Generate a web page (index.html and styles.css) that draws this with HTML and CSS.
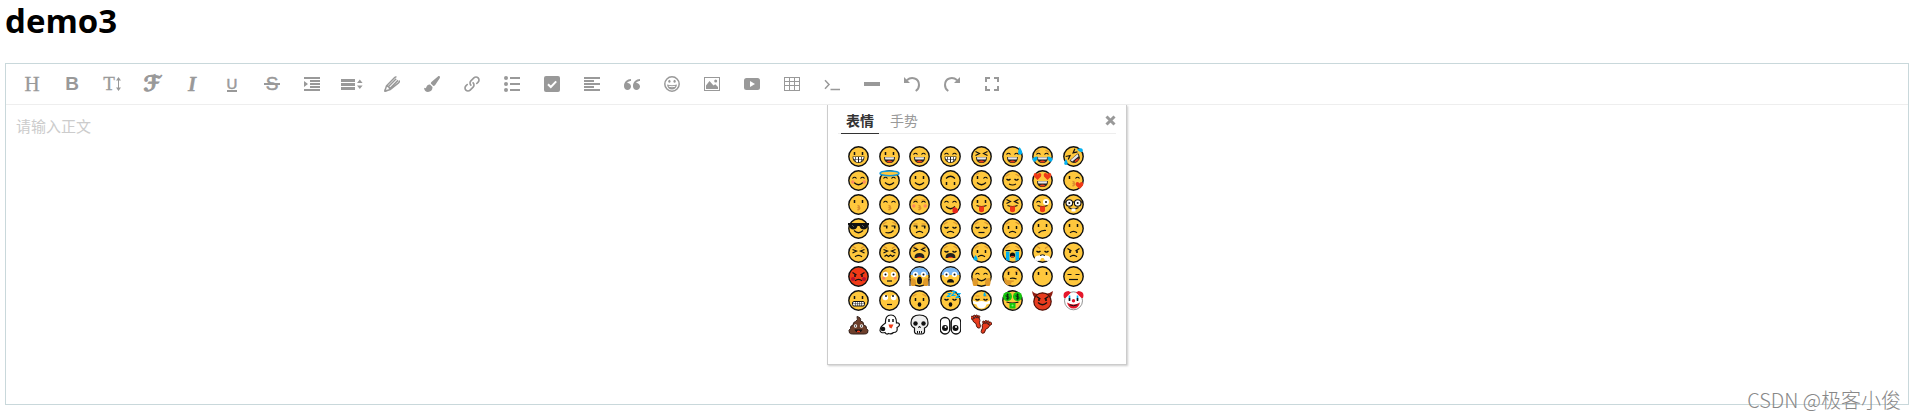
FILE: index.html
```html
<!DOCTYPE html>
<html lang="zh-CN">
<head>
    <meta charset="UTF-8">
    <meta name="viewport" content="width=device-width, initial-scale=1.0">
    <title>demo3</title>
    <link rel="stylesheet" href="styles.css">
</head>
<body>
    <h1>demo3</h1>

    <div class="editor">
        <div class="toolbar">
            <button class="tool tool-head" title="标题">H</button>
            <button class="tool tool-bold" title="加粗">B</button>
            <button class="tool tool-size" title="字号">T<svg width="5" height="14" viewBox="0 0 5 14"><path d="M2 3h1v8H2zM0 3.500L2.500 0 5 3.500zM0 10.500h5L2.500 14z"/></svg></button>
            <button class="tool tool-font" title="字体">ℱ</button>
            <button class="tool tool-italic" title="斜体">I</button>
            <button class="tool tool-underline" title="下划线"><span>U</span></button>
            <button class="tool tool-strike" title="删除线"><span>S</span></button>
            <button class="tool" title="缩进"><svg class="icon" viewBox="0 0 16 16"><path d="M0 1h16v2H0zM6 4h10v2H6zM6 7h10v2H6zM6 10h10v2H6zM0 13h16v2H0zM0 11V5l4 3z"/></svg></button>
            <button class="tool" title="行高"><svg class="icon icon-wide" viewBox="0 0 22 16"><path d="M0 3h14v3H0zM0 7h14v3H0zM0 11h14v3H0zM16 7l2.800-3.500L21.600 7zM16 9.500h5.600L18.800 13z"/></svg></button>
            <button class="tool" title="文字颜色"><svg class="icon" viewBox="0 0 16 16"><path class="line" d="M.8 15.200l1.700-5.400L10.700 1.500q.8-.8 1.800-.4M4 11l8.200-8.200M5.200 13.200l8.800-8.800M.8 15.200l5.400-1.700 8.300-6.700q1.200-1 .7-2.300M2.500 9.800q2.600.5 3.700 3.700"/><path d="M0 16l1-3.500L3.500 15z"/></svg></button>
            <button class="tool" title="背景色"><svg class="icon" viewBox="0 0 16 16"><path d="M15.600.3c.6.5.4 1.400.1 2L11.200 9c-.5.7-1.100 1-1.800 1L6.800 7.500c0-.7.3-1.300.9-1.800l6.200-5.200c.5-.4 1.200-.6 1.700-.2zM6 8.500l2.500 2.400C8.700 14 6.700 16 4 16c-2.200 0-3.600-1.200-4-4.200 1 .7 1.800.6 2.200-.3C2.900 9.600 4 8.300 6 8.500z"/></svg></button>
            <button class="tool" title="链接"><svg class="icon" viewBox="0 0 16 16"><path d="M6.879 9.934c-0.208 0-0.416-0.079-0.575-0.238-1.486-1.486-1.486-3.905 0-5.392l3-3c0.720-0.720 1.678-1.117 2.696-1.117s1.976 0.397 2.696 1.117c1.486 1.487 1.486 3.905 0 5.392l-1.371 1.371c-0.317 0.317-0.832 0.317-1.149 0s-0.317-0.832 0-1.149l1.371-1.371c0.853-0.853 0.853-2.241 0-3.094-0.413-0.413-0.963-0.641-1.547-0.641s-1.134 0.228-1.547 0.641l-3 3c-0.853 0.853-0.853 2.241 0 3.094 0.317 0.317 0.317 0.832 0 1.149-0.159 0.159-0.367 0.238-0.575 0.238zM4 15.813c-1.018 0-1.976-0.397-2.696-1.117-1.486-1.486-1.486-3.905 0-5.392l1.371-1.371c0.317-0.317 0.832-0.317 1.149 0s0.317 0.832 0 1.149l-1.371 1.371c-0.853 0.853-0.853 2.241 0 3.094 0.413 0.413 0.962 0.641 1.547 0.641s1.134-0.228 1.547-0.641l3-3c0.853-0.853 0.853-2.241 0-3.094-0.317-0.317-0.317-0.832 0-1.149s0.832-0.317 1.149 0c1.486 1.486 1.486 3.905 0 5.392l-3 3c-0.720 0.720-1.678 1.117-2.696 1.117z"/></svg></button>
            <button class="tool" title="序列"><svg class="icon" viewBox="0 0 16 16"><circle cx="2" cy="2" r="2"/><circle cx="2" cy="8" r="2"/><circle cx="2" cy="14" r="2"/><path d="M6 1h10v2H6zM6 7h10v2H6zM6 13h10v2H6z"/></svg></button>
            <button class="tool" title="待办事项"><svg class="icon" viewBox="0 0 16 16"><rect width="16" height="16" rx="2"/><path class="cut" d="M4 8.200l2.800 2.800 5.400-5.600"/></svg></button>
            <button class="tool" title="对齐"><svg class="icon" viewBox="0 0 16 16"><path d="M0 1h16v2H0zM0 4h10v2H0zM0 7h16v2H0zM0 10h10v2H0zM0 13h16v2H0z"/></svg></button>
            <button class="tool" title="引用"><svg class="icon" viewBox="0 0 16 16"><path d="M3.516 7c1.933 0 3.500 1.567 3.500 3.500s-1.567 3.500-3.500 3.500-3.500-1.567-3.500-3.500l-0.016-0.500c0-3.866 3.134-7 7-7v2c-1.336 0-2.591 0.520-3.536 1.464-0.182 0.182-0.348 0.375-0.497 0.578 0.179-0.028 0.362-0.043 0.548-0.043zM12.516 7c1.933 0 3.500 1.567 3.500 3.500s-1.567 3.500-3.500 3.500-3.500-1.567-3.500-3.500l-0.016-0.500c0-3.866 3.134-7 7-7v2c-1.336 0-2.591 0.520-3.536 1.464-0.182 0.182-0.348 0.375-0.497 0.578 0.179-0.028 0.362-0.043 0.549-0.043z"/></svg></button>
            <button class="tool" title="表情"><svg class="icon" viewBox="0 0 16 16"><circle class="line" cx="8" cy="8" r="7.200"/><ellipse cx="5.400" cy="5.300" rx="1.100" ry="1.500"/><ellipse cx="10.600" cy="5.300" rx="1.100" ry="1.500"/><path d="M3 8.500q5 1.600 10 0c-.3 3-2.200 5-5 5s-4.700-2-5-5z"/><path class="cut-thin" d="M4.800 10.300q3.200.9 6.400 0"/></svg></button>
            <button class="tool" title="图片"><svg class="icon" viewBox="0 0 16 16"><path d="M0 1h16v14H0zM1 2v12h14V2z" fill-rule="evenodd"/><path d="M2 13V9.500L5.500 5l4 4.500 1.800-1.300L14 11v2z"/><circle cx="11.700" cy="5" r="1.500"/></svg></button>
            <button class="tool" title="视频"><svg class="icon" viewBox="0 0 16 16"><rect y="2" width="16" height="12" rx="2.500"/><path class="hole" d="M6 5l5 3-5 3z"/></svg></button>
            <button class="tool" title="表格"><svg class="icon" viewBox="0 0 16 16"><path fill-rule="evenodd" d="M0 1h16v14H0zM1 2v3h4V2zM6 2v3h4V2zM11 2v3h4V2zM1 6v3h4V6zM6 6v3h4V6zM11 6v3h4V6zM1 10v4h4v-4zM6 10v4h4v-4zM11 10v4h4v-4z"/></svg></button>
            <button class="tool" title="代码"><svg class="icon" viewBox="0 0 16 16"><path class="line" d="M1 4.300L5 8.500 1 12.700M6.500 13.500H16"/></svg></button>
            <button class="tool" title="分割线"><svg class="icon" viewBox="0 0 16 16"><path d="M0 6h16v4H0z"/></svg></button>
            <button class="tool" title="撤销"><svg class="icon" viewBox="0 0 16 16"><path d="M0 1v6h6z"/><path class="line bold" d="M2.800 4.300C7.500.3 15 2 15 9c0 2.800-1.300 4.800-3.300 6"/></svg></button>
            <button class="tool" title="恢复"><svg class="icon" viewBox="0 0 16 16"><path d="M16 1v6h-6z"/><path class="line bold" d="M13.200 4.300C8.500.3 1 2 1 9c0 2.800 1.300 4.800 3.300 6"/></svg></button>
            <button class="tool" title="全屏"><svg class="icon" viewBox="0 0 16 16"><path d="M1 1h5v2H3v3H1zM10 1h5v5h-2V3h-3zM1 10h2v3h3v2H1zM13 10h2v5h-5v-2h3z"/></svg></button>
        </div>

        <textarea class="text" placeholder="请输入正文" aria-label="正文"></textarea>

        <!-- Emoji drop panel -->
        <div class="panel">
            <div class="panel-head">
                <button class="tab active">表情</button>
                <button class="tab">手势</button>
                <button class="close" aria-label="关闭"><svg width="11" height="11" viewBox="0 0 11 11"><path d="M1.500 1.500l8 8M9.500 1.500l-8 8"/></svg></button>
            </div>
            <div class="emojis" id="emojis"></div>
        </div>
    </div>

    <span class="watermark">CSDN @极客小俊</span>

    <script src="emoji.js"></script>
</body>
</html>
```
FILE: styles.css
```css
* {
    box-sizing: border-box;
}

body {
    position: relative;
    min-height: 100vh;
    margin: 0 7px 0 5px;
    background: #fff;
    color: #000;
    font-family: "Open Sans", "Noto Sans CJK SC", sans-serif;
}

h1 {
    margin: 0 0 21px;
    font-size: 33px;
    line-height: 42px;
}

button {
    padding: 0;
    border: none;
    background: none;
    font-family: inherit;
    cursor: pointer;
}

.editor {
    position: relative;
    border: 1px solid #c9d8db;
}

/* Toolbar */
.toolbar {
    display: flex;
    flex-wrap: wrap;
    padding: 0 6px;
    border-bottom: 1px solid #eee;
}

.tool {
    display: flex;
    align-items: center;
    justify-content: center;
    width: 40px;
    height: 40px;
    color: #999;
    line-height: 20px;
}

.tool svg {
    fill: #999;
}

.tool:hover {
    background: #f6f6f6;
}

.icon {
    width: 16px;
    height: 16px;
}

.icon-wide {
    width: 22px;
}

.icon .line {
    fill: none;
    stroke: #999;
    stroke-width: 1.5;
}

.icon .bold {
    stroke-width: 2;
}

.icon .cut,
.icon .cut-thin {
    fill: none;
    stroke: #fff;
    stroke-width: 2;
}

.icon .cut-thin {
    stroke-width: 1;
}

.icon .hole {
    fill: #fff;
}

.tool-head,
.tool-size,
.tool-italic {
    font-family: "Liberation Serif", serif;
    font-size: 21px;
    -webkit-text-stroke: 0.3px #999;
}

.tool-size {
    gap: 1px;
    font-size: 19px;
}

.tool-bold {
    font-family: "Liberation Sans", sans-serif;
    font-size: 19px;
    font-weight: bold;
}

.tool-font {
    font-family: "DejaVu Serif", "DejaVu Sans", serif;
    font-size: 21px;
    font-weight: bold;
    -webkit-text-stroke: 1px #999;
}

.tool-italic {
    font-style: italic;
    font-weight: bold;
}

.tool-underline,
.tool-strike {
    font-family: "Liberation Sans", sans-serif;
    font-size: 15px;
    -webkit-text-stroke: 0.5px #999;
}

.tool-underline span {
    border-bottom: 2px solid #999;
    line-height: 13px;
}

.tool-strike {
    font-size: 19px;
}

.tool-strike span {
    position: relative;
    padding: 0 2px;
}

.tool-strike span::after {
    content: "";
    position: absolute;
    left: 0;
    right: 0;
    top: 9px;
    height: 2px;
    background: #999;
}

/* Editing area */
.text {
    display: block;
    width: 100%;
    height: 299px;
    padding: 10px;
    border: none;
    outline: none;
    background: none;
    resize: none;
    font-family: inherit;
    font-size: 15px;
    line-height: 22px;
}

.text::placeholder {
    color: #ccc;
    opacity: 1;
}

/* Emoji panel */
.panel {
    position: absolute;
    top: 41px;
    left: 50%;
    width: 300px;
    height: 260px;
    margin-left: -130px;
    padding: 0 10px;
    border: 1px solid #ccc;
    border-top: none;
    background: #fff;
    box-shadow: 1px 1px 2px #ccc;
}

.panel-head {
    display: flex;
    height: 29px;
    padding: 0 0 0 3px;
    gap: 6px;
    border-bottom: 1px solid #eee;
}

.tab {
    height: 29px;
    padding: 4px 5px 0;
    border-bottom: 1px solid transparent;
    color: #999;
    font-size: 14px;
    line-height: 20px;
}

.tab.active {
    border-color: #333;
    color: #333;
    font-weight: bold;
}

.close {
    height: 30px;
    margin-left: auto;
}

.close svg {
    display: block;
    fill: none;
    stroke: #999;
    stroke-width: 3;
}

.emojis {
    display: grid;
    grid-template-columns: repeat(8, 1fr);
    grid-auto-rows: 24px;
    width: 246px;
    margin: 10px 5px;
}

.emoji {
    display: flex;
    align-items: center;
    justify-content: center;
}

.emoji svg {
    width: 21px;
    height: 21px;
}

.watermark {
    position: absolute;
    right: 8px;
    bottom: 3px;
    color: #888;
    font-family: "Noto Sans CJK SC", sans-serif;
    font-size: 20px;
    font-weight: 300;
    line-height: 30px;
    white-space: nowrap;
}
```
FILE: emoji.js
```javascript
// Every emoji is a 21x21 drawing put together from shared parts.
const ink = (d, w = 1.2) => `<path d="${d}" fill="none" stroke="#111" stroke-width="${w}"/>`;
const hue = (d, c, w = 1.2) => `<path d="${d}" fill="none" stroke="${c}" stroke-width="${w}"/>`;
const fill = (d, c) => `<path d="${d}" fill="${c}"/>`;
const dot = (x, y, r, c) => `<circle cx="${x}" cy="${y}" r="${r}" fill="${c}"/>`;
const disc = c => `<circle cx="10.5" cy="10.5" r="9.7" fill="${c}" stroke="#111" stroke-width="1.4"/>`;
const turn = (a, s) => `<g transform="rotate(${a} 10.5 10.5)">${s}</g>`;

const BROWN = '#d9902f', RED = '#f03a17', BLUE = '#00b0f0', PINK = '#ff8a5c';

const P = {
    face: disc('#ffc83d'),
    dots: ink('M6.5 6v3M14.5 6v3', 1.5),
    low: ink('M6.5 8v3M14.5 8v3', 1.5),
    happy: ink('M4.500 8.500q2-2.500 4 0M12.500 8.500q2-2.500 4 0'),
    closed: ink('M4.500 9q2 2 4 0M12.500 9q2 2 4 0'),
    squint: ink('M4.500 5.500L8.500 7.500 4.500 9.500M16.500 5.500L12.500 7.500 16.500 9.500'),
    wink: ink('M6.5 6v3', 1.5) + ink('M12.500 8.500q2-2.500 4 0'),
    flat: ink('M4.500 8.500h4M12.500 8.500h4'),
    side: ink('M4.500 8h4M12.500 8h4') + ink('M7.700 8v2.500M15.700 8v2.500', 1.5),
    angry: ink('M4.500 6.500l4 2.500M16.500 6.500l-4 2.500') + ink('M7 8.500v2.500M14 8.500v2.500', 1.6),
    wide: dot(6.5, 8.5, 2.7, '#fff') + dot(14.5, 8.5, 2.7, '#fff') + dot(6.5, 8.5, 1, '#111') + dot(14.5, 8.5, 1, '#111'),
    browUp: hue('M4 6.500q1-1.800 3.500-2M17 6.500q-1-1.800-3.500-2', BROWN),
    browDown: hue('M4 4.500q2 0 4 2M17 4.500q-2 0-4 2', BROWN),
    browFlat: hue('M4.500 6h4M12.500 6h4', BROWN),
    smile: ink('M6 12.500q4.500 4.500 9 0'),
    frown: ink('M7 14.800q3.500-3 7 0'),
    line: ink('M7.5 14.500h6'),
    slant: ink('M6.500 15q3-3 7.500-2.500'),
    smirk: ink('M6.500 14.500q5 1.500 8-2'),
    wavy: ink('M5.500 14.500l2-1.500 2 1.500 2-1.500 2 1.500 2-1.500'),
    kiss: hue('M9.500 11.500q3 .5 1 2 3 .5-1 2.500', BROWN, 1.4),
    grin: fill('M4.500 10.500h12q0 6.500-6 6.500t-6-6.500z', '#222') + fill('M5.300 11h2v2h-1.500zM8 11h2v2H8zM11 11h2v2h-2zM13.700 11h2l-.5 2h-1.500zM6.300 13.600H7.500v1.800zM8 13.600h2v2.600l-2-.5zM11 13.600h2v2l-2 .6zM13.700 13.600h1.200l-1.200 1.600z', '#fff'),
    open: fill('M5 11h11q0 6-5.500 6T5 11z', '#222') + fill('M5.800 11.300h9.400l-.6 2.200H6.400z', '#e8e8e8')
        + fill('M7.500 15.700q3-2.500 6 0-3 1.600-6 0z', RED),
    wail: fill('M5.500 16q0-5 5-5t5 5z', '#222') + fill('M7.500 16q3-2.500 6 0z', RED),
    tongue: ink('M5.500 11.500q5 2 10 0') + fill('M8 12.300h5v4q0 2-2.500 2T8 16.300z', RED),
    gasp: '<ellipse cx="10.5" cy="14.5" rx="1.800" ry="2.200" fill="#111"/>',
    blush: dot(4.8, 12, 1.7, PINK) + dot(16.2, 12, 1.7, PINK),
    tears: fill('M5.500 10.500q-4.500.5-5 2.800 0 2.700 2.300 2.400 2.700-.7 2.700-5.200zM15.500 10.500q4.500.5 5 2.800 0 2.700-2.300 2.400-2.700-.7-2.700-5.200z', BLUE),
    hands: fill('M1.500 12q4-.5 5 2 1.500 3-.5 6H2.500Q1 17.500 1.500 12zM19.500 12q-4-.5-5 2-1.500 3 .5 6h3.500q1.500-2.500 1-8z', '#e09a2b')
};

const face = (...parts) => P.face + parts.map(p => P[p] || p).join('');

const heart = (x, y) => fill(`M${x} ${y + 4}l-3.500-3.500q-1-3.500 1.500-3.500 1.500 0 2 1.500.5-1.500 2-1.500 2.500 0 1.500 3.500z`, RED);

const foot = place => `<g transform="${place}" fill="#e83c1e" stroke="#3a0c06" stroke-width=".8">`
    + '<path d="M-3.500-3Q0-5 3.500-3q.8 3-1 5 .8 5-1.500 5-2.800 0-2-5-2.500-2-2.500-5z"/>'
    + '<circle cx="-3.300" cy="-4.800" r="1.500"/><circle cx="-.7" cy="-5.500" r="1.200"/><circle cx="1.500" cy="-5.200" r="1.100"/><circle cx="3.500" cy="-4" r="1"/></g>';

const emojis = [
    ['😀', face('dots', 'grin')],
    ['😃', face('dots', 'open')],
    ['😄', face('happy', 'open')],
    ['😁', face('happy', 'grin')],
    ['😆', face('squint', 'open')],
    ['😅', face('happy', 'open', fill('M17.500 1q3.500 4.500 2.500 6.500t-3 1q-2-1 .5-7.500z', BLUE))],
    ['😂', face('browUp', 'happy', 'open', 'tears')],
    ['🤣', P.face + turn(-40, P.squint + P.open) + fill('M14 3.500q4-2 5.500-.5 1 2-.5 3-2 .5-5-2.500zM3 13q-2.500 4-1.500 5.500 2 1 3-.5.500-2-1.500-5z', BLUE)],

    ['😊', face('happy', 'smile', 'blush')],
    ['😇', face('happy', 'smile', '<ellipse cx="10.5" cy="3.300" rx="9.500" ry="2.400" fill="#ffc83d" stroke="#1597d4" stroke-width="1.500"/>')],
    ['🙂', face('dots', 'smile')],
    ['🙃', turn(180, face('dots', 'smile'))],
    ['😉', face('wink', 'smile', hue('M5 5q1-1.500 3-1.500', BROWN))],
    ['😌', face('browUp', 'closed', ink('M7 14q3.500 2 7 0'))],
    ['😍', face('open', heart(5.5, 6), heart(15.5, 6))],
    ['😘', face('wink', 'kiss', heart(16.5, 15))],

    ['😗', face('dots', 'kiss')],
    ['😙', face('happy', 'kiss')],
    ['😚', face('browFlat', 'happy', 'kiss', 'blush')],
    ['😋', face('happy', 'smile', fill('M12.500 14.500q2-2 4-.5 2.500 2 1 4.500-3 2-5-.5z', '#e5251c'))],
    ['😛', face('dots', 'tongue')],
    ['😝', face('squint', 'tongue')],
    ['😜', face(ink('M4.500 8.500q2-2.500 4 0'), dot(14, 8, 3, '#fff'), dot(14, 8, 1, '#111'), 'tongue')],
    ['🤓', face(ink('M1 8h19', 1.2),
        '<circle cx="6.300" cy="9" r="3.300" fill="#fff" stroke="#111" stroke-width="1.100"/><circle cx="14.700" cy="9" r="3.300" fill="#fff" stroke="#111" stroke-width="1.100"/>',
        dot(6.3, 9, 1, '#111'), dot(14.7, 9, 1, '#111'), ink('M5.500 13.500q5 3 10 0'), fill('M8.500 14.500h4v3h-4z', '#fff'))],

    ['😎', face('smile', fill('M0 5h21v2l-1.500.5q0 4-3.800 4-3.200 0-4.200-3.500h-2q-1 3.500-4.200 3.500-3.800 0-3.800-4L0 7z', '#111'), hue('M4 7l2 2M14 7l2 2', '#777', .7))],
    ['😏', face('browUp', 'side', 'smirk')],
    ['😒', face('browFlat', 'side', 'frown')],
    ['😞', face('browUp', 'closed', 'frown')],
    ['😔', face('browUp', 'closed', 'line')],
    ['😟', face('browUp', 'low', 'frown')],
    ['😕', face('dots', 'slant')],
    ['🙁', face('dots', 'frown')],

    ['😣', face('browDown', ink('M4.500 7.500l4 1.500-4 2M16.500 7.500l-4 1.500 4 2'), 'frown')],
    ['😖', face('browDown', ink('M4.500 7.500l4 1.500-4 2M16.500 7.500l-4 1.500 4 2'), 'wavy')],
    ['😫', face('browDown', 'squint', 'wail')],
    ['😩', face('browUp', 'closed', 'wail')],
    ['😢', face('browUp', 'low', 'frown', fill('M4.500 13q2.500 3 2 4.500t-2.500 1q-2-.5-1.500-2z', BLUE))],
    ['😭', face('browUp', ink('M3.500 8.500h5M12.500 8.500h5'), fill('M4 9.500h3.500v9.500L4 18zM13.500 9.500H17V18l-3.500 1z', BLUE), dot(10.5, 13, 2.6, '#111'), fill('M9 14h3v1H9z', RED))],
    ['😤', face('browDown', 'closed', fill('M7 13.5q3.500-1.500 7 0 3.500 0 4.500 3 0 2.500-3 2.500l-2.500-.5-1.500-2.500h-2L8 18.500l-2.500.5q-3 0-3-2.500 1-3 4.500-3z', '#fff'), ink('M8 13.500q2.500-1.500 5 0', 1))],
    ['😠', face('angry', 'frown')],

    ['😡', disc(RED) + dot(5, 13, 2, '#b5122d') + dot(16, 13, 2, '#b5122d') + P.angry + P.frown],
    ['😳', face('browUp', 'blush', 'wide', ink('M8 15h5'))],
    ['😱', face(fill('M1.500 9Q2.500 1.500 10.500 1.500T19.500 9z', '#7ab8f5'), 'wide', 'hands', '<ellipse cx="10.5" cy="14.500" rx="2.500" ry="3.800" fill="#111"/>', ink('M1 20V13M20 20V13', 1))],
    ['😨', face(fill('M1.500 9Q2.500 1.500 10.500 1.500T19.500 9z', '#7ab8f5'), 'wide', fill('M7 16.500q0-3.500 3.500-3.500t3.500 3.500z', '#111'))],
    ['🤗', face('happy', 'smile', 'hands')],
    ['🤔', face('browDown', 'dots', ink('M8 12.500q3-1 6.500.5'), fill('M2 11.500q2-.5 3 2.500l7 .5q.5 1.500-2.500 1.500 0 3-3.500 3.500Q1.500 17.500 2 11.500z', '#e09a2b'))],
    ['😶', face('dots')],
    ['😑', face('flat', ink('M6 13.500h9'))],

    ['😬', face('dots', '<rect x="4.500" y="11.500" width="12" height="4.500" rx="1.500" fill="#fff" stroke="#111"/>', ink('M5 13.700h11M7.500 11.500v4.500M9.500 11.500v4.500M11.500 11.500v4.500M13.500 11.500v4.500', .5))],
    ['🙄', face(dot(6.3, 7.5, 2.8, '#fff'), dot(14.7, 7.5, 2.8, '#fff'), dot(7, 6, 1, '#111'), dot(14, 6, 1, '#111'), ink('M8 14.500h5'))],
    ['😯', face('browUp', 'low', 'gasp')],
    ['😴', face('closed', 'gasp', hue('M7.500 3.500h3l-3 3h3M12 1.500h3.500l-3.500 4h3.500M16.500 3.500h3.500l-3.500 4h3.500', BLUE, 1.2))],
    ['😷', face('browFlat', 'closed', fill('M2 10.500l4 1.500q4.500-2 9 0l4-1.500v3l-3.500 1q-1 4-5 4t-5-4L2 13.500z', '#fff'), fill('M13.500 2q2 2.500 1.300 3.700t-2.300 0Q12 4.500 13.500 2z', BLUE))],
    ['🤑', face(dot(5.5, 6.5, 4.5, '#16c60c'), dot(15.5, 6.5, 4.5, '#16c60c'), ink('M7 5q-3-1-3 .7t1.500 1 1.500 1.300-3 .7M5.500 3.500v6M17 5q-3-1-3 .7t1.500 1 1.500 1.300-3 .7M15.500 3.500v6', .8), ink('M4.500 12q6 2 12 0'), fill('M7.500 13h6v5.500h-6z', '#16c60c'), dot(10.5, 15.5, 1, '#7df07a'))],
    ['😈', fill('M0 1q1 6 4 8l4-5Q3 4.500 0 1zM21 1q-1 6-4 8l-4-5q5-.5 8-3z', '#8f1d12') + '<circle cx="10.5" cy="11.500" r="8.700" fill="#e83c1e" stroke="#4d0f08" stroke-width="1.200"/>' + P.angry + P.smile],
    ['🤡', '<circle cx="10.5" cy="10.8" r="9" fill="#fff" stroke="#777" stroke-width=".8"/>'
        + fill('M1 8Q-1 1.500 5.500 1L8 2.500 2.500 8zM20 8q2-6.500-4.500-7L13 2.500 18.500 8z', '#e5172b') + hue('M6.500 5.500v5M14.500 5.500v5', BLUE, 1.6) + P.low + fill('M4 12.500q6.500 4 13 0-1.500 6-6.500 6T4 12.500z', '#e5172b') + ink('M6.500 14.800q4 2 8 0', 1) + dot(10.5, 10.8, 1.7, '#e5172b')],

    ['💩', '<path d="M9 2.500q4.500 1 3.500 4.500 3.500.5 3.200 4 3.300.8 2.800 3.500 2.500 1.500 1 4.500-1 1-3 1h-12q-2 0-3-1-1.500-3 1-4.500-.5-2.700 2.500-3.500 0-3 2.500-3.500Q10.500 6 9 2.500z" fill="#6d3f2b" stroke="#33201a"/>'
        + dot(7.5, 12, 1.7, '#fff') + dot(13.5, 12, 1.7, '#fff') + dot(7.5, 12, .8, '#111') + dot(13.5, 12, .8, '#111') + fill('M6.500 15.500h8q-1 3-4 3t-4-3z', '#111') + fill('M9 17q1.500-1 3 0v1.200H9z', RED)],
    ['👻', '<path d="M6.500 9q-.5-8 5.500-8 5.500 0 5.500 8 2.500-.5 3 1.500 0 2-2.500 3 1 5-3.500 5-2 2-5 1-2 1.500-3.500-1-4.500 1-5-2 0-4 5.500-7.500z" fill="#fff" stroke="#111" stroke-width="1.200"/>'
        + ink('M10 5v3M14 5v3', 1.5) + fill('M9.500 10.500h5l-2 4-2-1z', RED) + dot(4, 15, 2.3, '#111')],
    ['💀', '<path d="M10.500 1Q19 1 19 9q0 3.500-3.500 5v4q-.5 2-2.500 2H8q-2 0-2.500-2v-4Q2 12.500 2 9q0-8 8.500-8z" fill="#eee" stroke="#111" stroke-width="1.200"/>'
        + dot(6.5, 9.5, 2.2, '#111') + dot(14.5, 9.5, 2.2, '#111') + ink('M9.500 14l1-2 1 2M8.500 17v2.500M10.500 17v2.500M12.500 17v2.500', 1)],
    ['👀', '<rect x=".2" y="3.500" width="9.600" height="16.500" rx="4.800" fill="#fff" stroke="#111" stroke-width="1.400"/><rect x="11.200" y="3.500" width="9.600" height="16.500" rx="4.800" fill="#fff" stroke="#111" stroke-width="1.400"/>'
        + dot(5, 14, 3, '#111') + dot(15.5, 14, 3, '#111') + dot(5.5, 13, 1, '#fff') + dot(16, 13, 1, '#fff')],
    ['👣', foot('translate(5.500 7.500) rotate(-15)') + foot('translate(14.500 13) rotate(20) scale(-1 1)')]
];

document.getElementById('emojis').innerHTML = emojis.map(([char, art]) =>
    `<button class="emoji" aria-label="${char}"><svg viewBox="0 0 21 21">${art}</svg></button>`
).join('');
```
